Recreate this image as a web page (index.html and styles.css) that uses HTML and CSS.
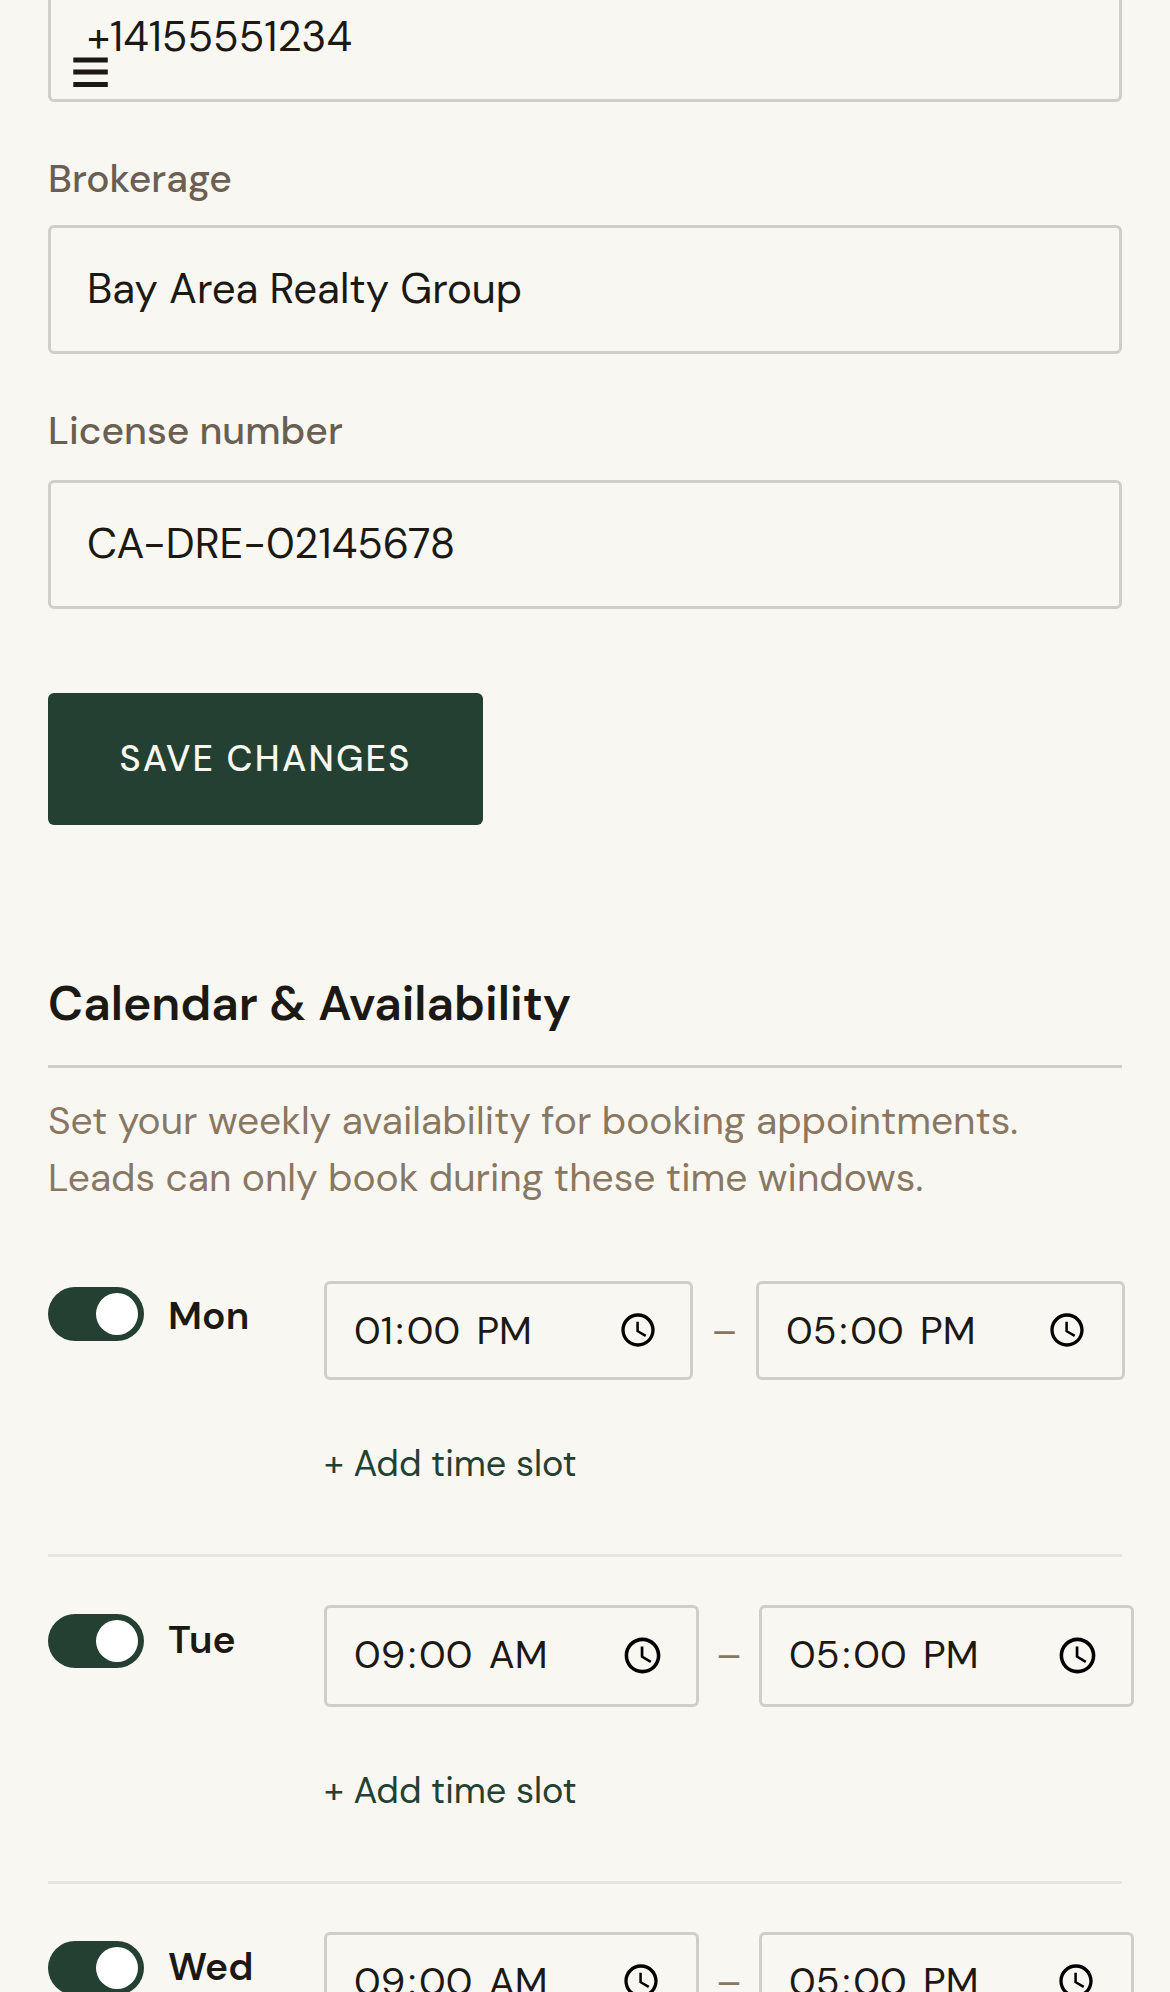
FILE: index.html
```html
<!DOCTYPE html>
<html lang="en">
<head>
  <meta charset="UTF-8">
  <meta name="viewport" content="width=device-width, initial-scale=1.0">
  <title>Settings</title>
  <link rel="stylesheet" href="styles.css">
</head>
<body>
  <svg class="icon-defs" aria-hidden="true">
    <symbol id="clock" viewBox="0 0 24 24">
      <path d="M11.99 2C6.47 2 2 6.48 2 12s4.47 10 9.99 10C17.52 22 22 17.52 22 12S17.52 2 11.99 2zM12 20c-4.42 0-8-3.58-8-8s3.58-8 8-8 8 3.58 8 8-3.58 8-8 8z"/>
      <path d="M12.5 7H11v6l5.25 3.15.75-1.23-4.5-2.67z"/>
    </symbol>
  </svg>

  <button class="menu-button" aria-label="Open menu">
    <svg viewBox="0 0 36 32">
      <path d="M.3 3.9h34.5M.3 16.1h34.5M.3 28.5h34.5"/>
    </svg>
  </button>

  <main class="settings">
    <form class="profile">
      <input class="input input-phone" type="text" value="+14155551234" aria-label="Phone">
      <label class="label" for="brokerage">Brokerage</label>
      <input class="input" id="brokerage" type="text" value="Bay Area Realty Group">
      <label class="label label-license" for="license">License number</label>
      <input class="input" id="license" type="text" value="CA-DRE-02145678">
      <button class="save-button" type="button">Save changes</button>
    </form>

    <section class="availability">
      <h2>Calendar &amp; Availability</h2>
      <p class="description">Set your weekly availability for booking appointments. Leads can only book during these time windows.</p>

      <div class="day day-mon">
        <div class="day-toggle">
          <span class="toggle"></span>
          <span class="day-name">Mon</span>
        </div>
        <div class="day-slots">
          <div class="slot">
            <div class="time">
              <div class="value"><span>01</span>:<span>00</span> <span>PM</span></div>
              <svg class="clock"><use href="#clock"/></svg>
            </div>
            <span class="dash">–</span>
            <div class="time">
              <div class="value"><span>05</span>:<span>00</span> <span>PM</span></div>
              <svg class="clock clock-inset"><use href="#clock"/></svg>
            </div>
          </div>
          <button class="add-slot">+ Add time slot</button>
        </div>
      </div>

      <div class="day day-tue">
        <div class="day-toggle">
          <span class="toggle"></span>
          <span class="day-name">Tue</span>
        </div>
        <div class="day-slots">
          <div class="slot">
            <div class="time">
              <div class="value"><span>09</span>:<span>00</span> <span>AM</span></div>
              <svg class="clock"><use href="#clock"/></svg>
            </div>
            <span class="dash">–</span>
            <div class="time">
              <div class="value"><span>05</span>:<span>00</span> <span>PM</span></div>
              <svg class="clock"><use href="#clock"/></svg>
            </div>
          </div>
          <button class="add-slot">+ Add time slot</button>
        </div>
      </div>

      <div class="day">
        <div class="day-toggle">
          <span class="toggle"></span>
          <span class="day-name">Wed</span>
        </div>
        <div class="day-slots">
          <div class="slot">
            <div class="time">
              <div class="value"><span>09</span>:<span>00</span> <span>AM</span></div>
              <svg class="clock clock-inset"><use href="#clock"/></svg>
            </div>
            <span class="dash">–</span>
            <div class="time">
              <div class="value"><span>05</span>:<span>00</span> <span>PM</span></div>
              <svg class="clock clock-inset"><use href="#clock"/></svg>
            </div>
          </div>
        </div>
      </div>
    </section>
  </main>
</body>
</html>
```
FILE: styles.css
```css
* {
  box-sizing: border-box;
}

html, body {
  margin: 0;
  padding: 0;
  height: 100%;
  overflow: hidden;
}

body {
  background-color: #f8f7f2;
  color: #1c1914;
  font-family: 'DM Sans', 'Inter', sans-serif;
}

button, input {
  margin: 0;
  font-family: inherit;
}

.icon-defs {
  display: none;
}

/* Menu button floats over the page */
.menu-button {
  position: fixed;
  top: 56px;
  left: 73px;
  display: flex;
  padding: 0;
  border: none;
  background: none;
}

.menu-button svg {
  width: 36px;
  height: 32px;
  stroke: #1c1914;
  stroke-width: 5;
}

.settings {
  padding: 0 48px;
}

/* Profile form */
.profile {
  display: flex;
  flex-direction: column;
  align-items: flex-start;
}

.input {
  width: 100%;
  height: 129px;
  padding: 0 36px 2px;
  border: 3px solid #d0cec8;
  border-radius: 6px;
  background: transparent;
  color: #1c1914;
  font-size: 42px;
}

.input-phone {
  margin-top: -27px;
}

.label {
  margin: 47px 0 16px;
  line-height: 60px;
  font-size: 39px;
  font-weight: 500;
  color: #6b5e52;
}

.label-license {
  margin-bottom: 19px;
}

.save-button {
  width: 435px;
  height: 132px;
  margin-top: 84px;
  padding: 0 0 2px;
  border: none;
  border-radius: 6px;
  background-color: #244032;
  color: #f8f7f2;
  font-size: 36px;
  font-weight: 500;
  letter-spacing: 2.16px;
  text-transform: uppercase;
}

/* Availability */
.availability h2 {
  margin: 144px 0 0;
  padding-bottom: 27px;
  border-bottom: 3px solid #d0cec8;
  font-size: 48px;
  font-weight: 600;
  line-height: 69px;
}

.description {
  margin: 24px 0 27px;
  font-size: 39px;
  line-height: 57px;
  color: #8a7762;
}

.day {
  display: flex;
  padding: 48px 0 63px;
  border-bottom: 3px solid #e7e5df;
}

.day-toggle {
  display: flex;
  align-items: flex-start;
  flex: 0 0 276px;
  gap: 24px;
}

.toggle {
  display: flex;
  justify-content: flex-end;
  width: 96px;
  height: 54px;
  margin-top: 9px;
  padding: 6px;
  border-radius: 27px;
  background-color: #244032;
}

.toggle::after {
  content: '';
  width: 42px;
  height: 42px;
  border-radius: 50%;
  background-color: #fff;
}

.day-name {
  font-size: 39px;
  font-weight: 600;
  line-height: 69px;
}

.slot {
  display: flex;
}

.time {
  display: flex;
  flex: none;
  width: 375px;
  height: 102px;
  padding: 0 24px;
  border: 3px solid #d0cec8;
  border-radius: 6px;
}

.value {
  font-size: 39px;
  line-height: 93px;
}

.value span {
  padding: 0 3px;
}

.clock {
  width: 40px;
  height: 40px;
  margin: 26px 8.5px 0 auto;
  fill: #000;
}

.clock-inset {
  margin-right: 11.5px;
}

.dash {
  width: 60px;
  text-align: center;
  font-size: 39px;
  line-height: 99px;
  color: #8a7762;
}

.add-slot {
  display: block;
  height: 54px;
  margin-top: 56px;
  padding: 0;
  border: none;
  background: none;
  color: #244032;
  font-size: 36px;
}

.day-mon .day-slots,
.day-tue .day-slots {
  padding-bottom: 1px;
}

.day-mon .toggle {
  margin-top: 6px;
}

.day-mon .time {
  width: 369px;
  height: 99px;
}

.day-mon .dash {
  width: 63px;
}

.day-tue .clock {
  width: 43px;
  height: 43px;
}
```
